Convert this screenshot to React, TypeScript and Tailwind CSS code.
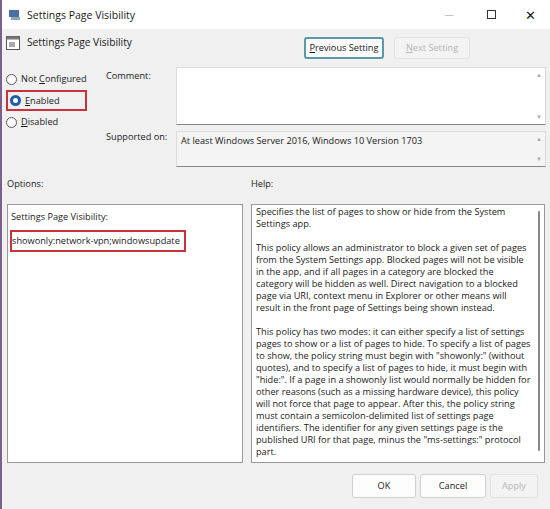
import React from 'react';

const Radio = ({ label, checked }: { label: React.ReactNode; checked?: boolean }) => (
  <div className="flex items-center gap-[4px] h-[18px]">
    <span
      className={
        checked
          ? 'w-[11px] h-[11px] rounded-full bg-[#1c5fa8] flex items-center justify-center'
          : 'w-[11px] h-[11px] rounded-full border border-[#555] bg-white'
      }
    >
      {checked && <span className="w-[5px] h-[5px] rounded-full bg-white" />}
    </span>
    <span>{label}</span>
  </div>
);

const Arrows = () => (
  <div className="flex flex-col justify-between items-center w-[12px] py-[4px] text-[6px] text-[#aaa] leading-none">
    <span>▲</span>
    <span>▼</span>
  </div>
);

const Btn = ({ children, w, disabled }: { children: React.ReactNode; w: string; disabled?: boolean }) => (
  <div
    className={`${w} h-[24px] flex items-center justify-center rounded-[3px] border ${
      disabled ? 'border-[#e2e2e2] text-[#b5b5b5] bg-[#f3f3f3]' : 'border-[#d0d0d0] bg-[#fdfdfd] text-[#222]'
    }`}
  >
    {children}
  </div>
);

export default function App() {
  return (
    <div
      className="w-[550px] h-[509px] bg-[#f0f0f0] text-[9.2px] leading-[12px] text-[#1a1a1a] border-l-2 border-[#7d5e8e] flex flex-col"
      style={{ fontFamily: '"Open Sans", "Liberation Sans", sans-serif' }}
    >
      {/* title bar */}
      <div className="h-[29px] bg-white flex items-center pl-[6px] shrink-0">
        <svg width="14" height="12" viewBox="0 0 14 12" className="mr-[5px]">
          <rect x="1" y="1" width="10" height="7" fill="#4a6fa5" />
          <rect x="3" y="8" width="9" height="3" fill="#8aa" />
        </svg>
        <span className="text-[10.5px] flex-1">Settings Page Visibility</span>
        <span className="w-[46px] text-center text-[#999]">—</span>
        <span className="w-[38px] flex justify-center">
          <span className="w-[9px] h-[9px] border border-[#333]" />
        </span>
        <span className="w-[40px] text-center text-[13px]">✕</span>
      </div>

      {/* header row */}
      <div className="flex items-start h-[38px] pt-[6px] pl-[4px]">
        <svg width="14" height="14" viewBox="0 0 14 14" className="mt-[1px] mr-[7px]">
          <rect x="0.5" y="0.5" width="13" height="13" fill="#fff" stroke="#555" />
          <rect x="0.5" y="0.5" width="13" height="3" fill="#777" />
          <rect x="3" y="6" width="6" height="5" fill="#aaa" />
        </svg>
        <span className="text-[10.2px] flex-1 mt-[1px]">Settings Page Visibility</span>
        <div className="flex gap-[10px] mr-[80px] mt-[2px]">
          <div className="w-[80px] h-[22px] flex items-center justify-center border-2 border-[#5a9aa8] rounded-[3px] bg-[#fbfbfb]">
            <span><u>P</u>revious Setting</span>
          </div>
          <div className="w-[76px] h-[22px] flex items-center justify-center border border-[#e2e2e2] text-[#b5b5b5] bg-[#f3f3f3] rounded-[3px]">
            <span><u>N</u>ext Setting</span>
          </div>
        </div>
      </div>

      {/* state + comment */}
      <div className="flex px-[4px]">
        <div className="w-[100px] pt-[3px]">
          <Radio label={<span>Not <u>C</u>onfigured</span>} />
          <div className="border-2 border-[#c8323a] w-[81px] h-[21px] flex items-center pl-[2px] my-[2px]">
            <Radio label={<span><u>E</u>nabled</span>} checked />
          </div>
          <Radio label={<span><u>D</u>isabled</span>} />
        </div>
        <div className="flex-1 flex flex-col gap-[6px]">
          <div className="flex">
            <span className="w-[70px] pt-[3px]">Comment:</span>
            <div className="flex-1 h-[58px] bg-white border border-[#dcdcdc] border-b-[#888] flex justify-end">
              <Arrows />
            </div>
          </div>
          <div className="flex">
            <span className="w-[70px] pt-[0px]">Supported on:</span>
            <div className="flex-1 h-[36px] bg-[#f4f4f4] border border-[#dcdcdc] border-b-[#888] flex">
              <span className="flex-1 pl-[4px] pt-[3px]">At least Windows Server 2016, Windows 10 Version 1703</span>
              <Arrows />
            </div>
          </div>
        </div>
      </div>

      {/* labels */}
      <div className="flex px-[5px] mt-[11px] h-[26px]">
        <span className="w-[244px]">Options:</span>
        <span>Help:</span>
      </div>

      {/* panes */}
      <div className="flex px-[5px] gap-[8px] h-[259px]">
        <div className="w-[236px] bg-white border border-[#999] pt-[6px] pl-[2px]">
          <div className="pl-[1px]">Settings Page Visibility:</div>
          <div className="mt-[7px] w-[176px] h-[22px] border-2 border-[#c8323a] flex items-center whitespace-nowrap">
            <span>showonly:network-vpn;windowsupdate</span>
          </div>
        </div>
        <div className="w-[294px] bg-white border border-[#999] flex overflow-hidden">
          <div className="flex-1 pl-[4px] pr-[3px] pt-[1px] flex flex-col gap-[12px]">
            <p>Specifies the list of pages to show or hide from the System Settings app.</p>
            <p>
              This policy allows an administrator to block a given set of pages from the System Settings app. Blocked
              pages will not be visible in the app, and if all pages in a category are blocked the category will be
              hidden as well. Direct navigation to a blocked page via URI, context menu in Explorer or other means will
              result in the front page of Settings being shown instead.
            </p>
            <p>
              This policy has two modes: it can either specify a list of settings pages to show or a list of pages to
              hide. To specify a list of pages to show, the policy string must begin with "showonly:" (without quotes),
              and to specify a list of pages to hide, it must begin with "hide:". If a page in a showonly list would
              normally be hidden for other reasons (such as a missing hardware device), this policy will not force that
              page to appear. After this, the policy string must contain a semicolon-delimited list of settings page
              identifiers. The identifier for any given settings page is the published URI for that page, minus the
              "ms-settings:" protocol part.
            </p>
          </div>
          <div className="w-[10px] flex flex-col items-center pt-[6px]">
            <div className="w-[2px] h-[240px] bg-[#888] rounded" />
          </div>
        </div>
      </div>

      {/* footer */}
      <div className="flex justify-end gap-[4px] pr-[12px] mt-[11px]">
        <Btn w="w-[64px]">OK</Btn>
        <Btn w="w-[66px]">Cancel</Btn>
        <Btn w="w-[48px]" disabled>Apply</Btn>
      </div>
    </div>
  );
}
